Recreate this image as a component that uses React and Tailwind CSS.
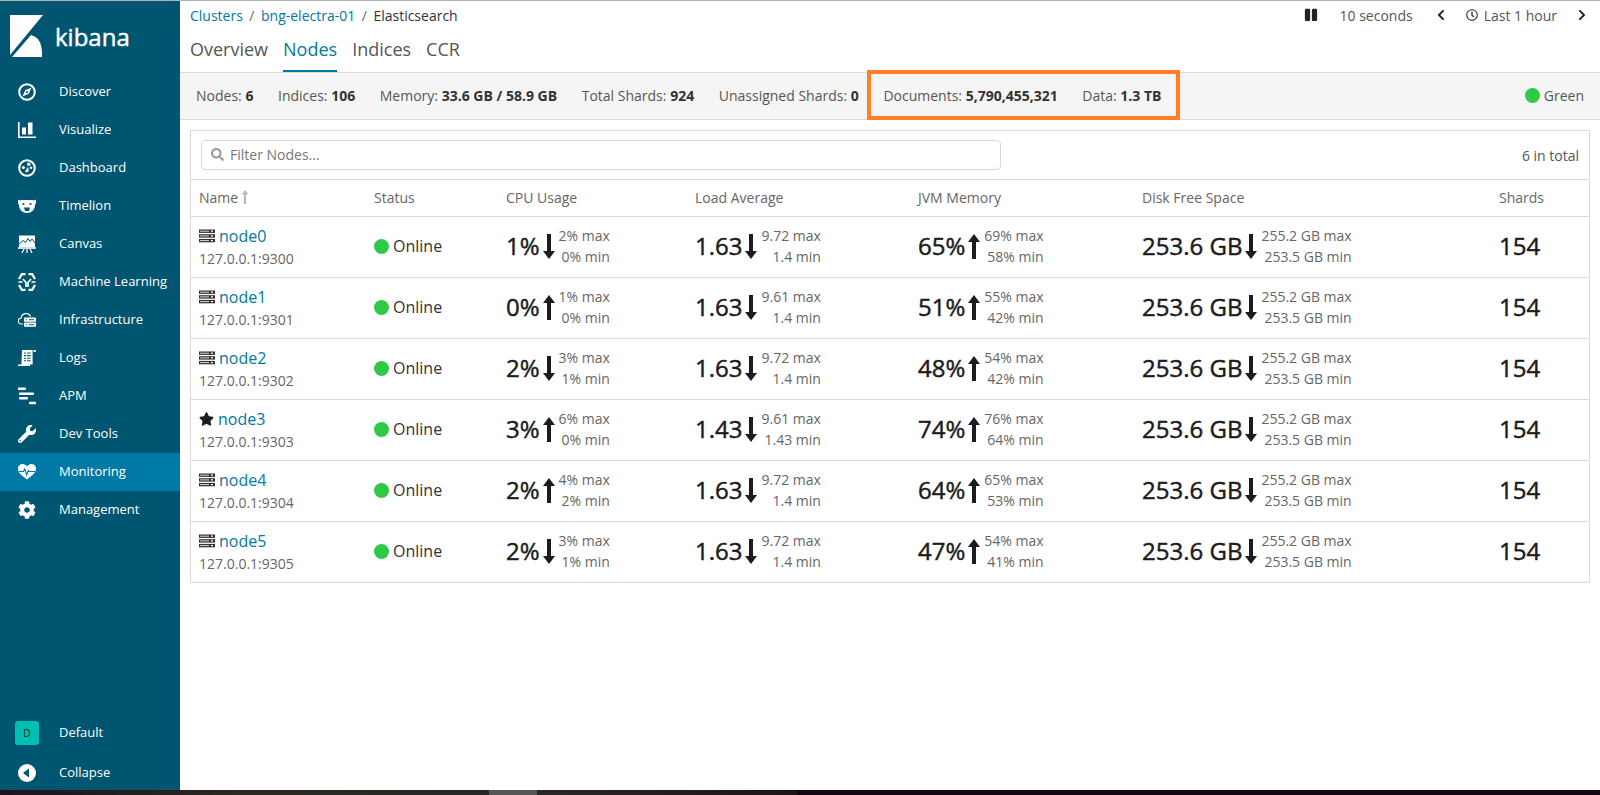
import React from "react";
import { FaWrench, FaCog, FaStar, FaPause, FaChevronLeft, FaChevronRight, FaRegClock, FaSearch } from "react-icons/fa";

const W = "#ffffff";
const I = ({ children }) => (
  <svg viewBox="0 0 18 18" className="w-[18px] h-[18px] shrink-0" fill="none">{children}</svg>
);
const icons = {
  compass: (
    <I>
      <circle cx="9" cy="9" r="7.8" stroke={W} strokeWidth="2" />
      <path d="M13.5 4.5 L10.8 10.8 L4.5 13.5 L7.2 7.2 Z M9 8 a1 1 0 1 0 .01 0" fill={W} fillRule="evenodd" />
    </I>
  ),
  chart: (
    <I>
      <path d="M0 1h1.6v14.4H18V17H0Z" fill={W} />
      <rect x="4" y="6.5" width="4" height="7" fill={W} />
      <rect x="10" y="1.5" width="4.5" height="12" fill={W} />
    </I>
  ),
  dash: (
    <I>
      <circle cx="9" cy="9" r="7.8" stroke={W} strokeWidth="2" />
      <circle cx="5.4" cy="8.4" r="1.5" fill={W} />
      <circle cx="10.8" cy="5.2" r="1.7" fill={W} />
      <circle cx="13" cy="8.8" r="1.3" fill={W} />
      <path d="M7 12.6 L10 7.8 L10.8 11.6 A2.2 2.2 0 0 1 7 12.6Z" fill={W} />
    </I>
  ),
  bear: (
    <I>
      <path d="M0 2.5c1.5 1 3 1 4 .5h10c1 .5 2.5.5 4-.5 .4 3-.4 4.5-1 5.5 0 5-4 8-8 8s-8-3-8-8C.4 7 -.4 5.5 0 2.5Z" fill={W} />
      <circle cx="5.5" cy="7" r="1.1" fill="#005571" />
      <circle cx="12.5" cy="7" r="1.1" fill="#005571" />
      <path d="M6 10.5h6l-1 3.5H7Z" fill="#005571" />
    </I>
  ),
  canvas: (
    <I>
      <rect x="1" y="0.5" width="16" height="11.5" fill={W} />
      <path d="M1 9 L5 5.5 L7.5 7.5 L10 3.5 L12 6.5 L14 4 L17 8" stroke="#005571" strokeWidth="1" />
      <rect x="0" y="12.2" width="18" height="1.6" fill={W} />
      <path d="M6 14 L4 18 M9 14 V18 M12 14 L14 18" stroke={W} strokeWidth="1.2" />
    </I>
  ),
  ml: (
    <I>
      <path d="M7.5 1.2 L3.8 1.2 L1 6 M1 12 L3.8 16.8 L7.5 16.8 M10.5 1.2 L14.2 1.2 L17 6 M17 12 L14.2 16.8 L10.5 16.8" stroke={W} strokeWidth="2.2" />
      <path d="M5 6 L8 9.5 V14 M13 6 L10 9.5 V14 M0.5 9h4M13.5 9h4" stroke={W} strokeWidth="1.7" />
    </I>
  ),
  infra: (
    <I>
      <path d="M5 13H3.5a3 3 0 0 1-.4-6A5 5 0 0 1 12.6 5.4" stroke={W} strokeWidth="1.1" />
      <rect x="6" y="6.6" width="12" height="4.2" rx="0.6" fill={W} />
      <rect x="6" y="11.6" width="12" height="4.2" rx="0.6" fill={W} />
      <path d="M8 8.7h1M11 8.7h5M8 13.7h1M11 13.7h5" stroke="#005571" strokeWidth="1" />
    </I>
  ),
  logs: (
    <I>
      <path d="M4 1h10.6v14.5H12V17H0v-1.6h3.4Z" fill={W} />
      <path d="M6 4h2M9 4h3.6M6 6.6h2M9 6.6h3.6M6 9.2h2M9 9.2h3.6M6 11.8h2M9 11.8h3.6" stroke="#005571" strokeWidth="1.1" />
      <path d="M15.5 1h2.2v2h-2.2Z" fill={W} />
    </I>
  ),
  apm: (
    <I>
      <rect x="-1" y="0.5" width="9" height="2.4" rx="0.8" fill={W} />
      <rect x="1" y="5.5" width="15" height="2.4" rx="0.8" fill={W} />
      <rect x="1" y="10" width="9" height="2.4" rx="0.8" fill={W} />
      <rect x="11" y="14.8" width="7" height="2.4" rx="0.8" fill={W} />
    </I>
  ),
  heart: (
    <I>
      <path d="M9 16.5 C4 12.5 0 10 0 5.5 C0 2.5 2.2 1 4.5 1 C6.5 1 8 2 9 3.5 C10 2 11.5 1 13.5 1 C15.8 1 18 2.5 18 5.5 C18 10 14 12.5 9 16.5Z" fill={W} />
      <path d="M1 8.5h4.5l1.2-2.5 2 6 1.6-4.5 0.8 1H17" stroke="#0079a5" strokeWidth="1.1" />
    </I>
  ),
};

const nav = [
  ["Discover", icons.compass],
  ["Visualize", icons.chart],
  ["Dashboard", icons.dash],
  ["Timelion", icons.bear],
  ["Canvas", icons.canvas],
  ["Machine Learning", icons.ml],
  ["Infrastructure", icons.infra],
  ["Logs", icons.logs],
  ["APM", icons.apm],
  ["Dev Tools", <FaWrench className="w-[18px] h-[18px] text-white" />],
  ["Monitoring", icons.heart, true],
  ["Management", <FaCog className="w-[18px] h-[18px] text-white" />],
];

const Arrow = ({ up, size = "h-[25px] w-[12px] -mt-[2px]" }) => (
  <svg viewBox="0 0 12 25" className={`${size} shrink-0`} fill="#1a1c21">
    {up ? (
      <path d="M6 0 L12 8 H8 V25 H4 V8 H0 Z" />
    ) : (
      <path d="M6 25 L12 17 H8 V0 H4 V17 H0 Z" />
    )}
  </svg>
);

const Metric = ({ value, up, max, min }) => (
  <div className="flex items-center">
    <span className="text-[24px] leading-[32px] -mt-[2px] font-normal [-webkit-text-stroke:0.45px_#1a1c21] text-[#1a1c21] mr-[3px]">{value}</span>
    <Arrow up={up} />
    <div className="flex flex-col items-end text-[14px] leading-[21px] text-[#666666] ml-[4px] -mt-[2px]">
      <span>{max}</span>
      <span>{min}</span>
    </div>
  </div>
);

const Server = () => (
  <svg viewBox="0 0 16 14" className="w-[16px] h-[14px] shrink-0">
    <rect x="0" y="0.5" width="16" height="3.4" fill="#333333" />
    <rect x="0" y="5.2" width="16" height="3.4" fill="#333333" />
    <rect x="0" y="9.9" width="16" height="3.4" fill="#333333" />
    <path d="M1 2.2h9M1 6.9h9M1 11.6h9" stroke="#d9d9d9" strokeWidth="1" />
    <path d="M12 2.2h2M12 6.9h2M12 11.6h2" stroke="#ffffff" strokeWidth="1.2" />
  </svg>
);

const rows = [
  ["node0", "9300", "1%", false, "2% max", "0% min", "1.63", false, "9.72 max", "1.4 min", "65%", true, "69% max", "58% min"],
  ["node1", "9301", "0%", true, "1% max", "0% min", "1.63", false, "9.61 max", "1.4 min", "51%", true, "55% max", "42% min"],
  ["node2", "9302", "2%", false, "3% max", "1% min", "1.63", false, "9.72 max", "1.4 min", "48%", true, "54% max", "42% min"],
  ["node3", "9303", "3%", true, "6% max", "0% min", "1.43", false, "9.61 max", "1.43 min", "74%", true, "76% max", "64% min"],
  ["node4", "9304", "2%", true, "4% max", "2% min", "1.63", false, "9.72 max", "1.4 min", "64%", true, "65% max", "53% min"],
  ["node5", "9305", "2%", false, "3% max", "1% min", "1.63", false, "9.72 max", "1.4 min", "47%", true, "54% max", "41% min"],
];

const cols = "grid grid-cols-[175px_132px_189px_223px_224px_358px_1fr]";

const Stat = ({ label, value }) => (
  <span>
    {label}: <b className="font-bold text-[#333333]">{value}</b>
  </span>
);

export default function App() {
  return (
    <div className="h-[795px] w-[1600px] flex flex-col overflow-hidden bg-white text-[#333333] font-['Open_Sans',sans-serif]">
      <div className="h-px bg-[#b3b3b3] shrink-0" />
      <div className="flex flex-1 min-h-0">
        <aside className="w-[180px] shrink-0 bg-[#005571] flex flex-col text-white text-[13px]">
          <div className="h-[72px] flex items-start pl-[10px] pt-[14px] gap-[12px]">
            <svg viewBox="0 0 33 42" className="w-[33px] h-[42px] shrink-0">
              <path d="M0 0H33L0 40Z" fill={W} />
              <path d="M2 42 L21 20 C32 23 32 34 32 42Z" fill={W} />
            </svg>
            <span className="text-[24px] leading-[30px] font-normal [-webkit-text-stroke:0.45px_#ffffff] mt-[7px]">kibana</span>
          </div>
          {nav.map(([label, icon, active]) => (
            <div key={label} className={`h-[38px] flex items-center pl-[18px] gap-[23px] ${active ? "bg-[#0079a5]" : ""}`}>
              {icon}
              <span>{label}</span>
            </div>
          ))}
          <div className="flex-1" />
          <div className="h-[40px] mb-[3px] flex items-center pl-[15px] gap-[20px]">
            <div className="w-[24px] h-[24px] rounded-[3px] bg-[#00bfb3] flex items-center justify-center text-[10px] text-[#1a1c21]">D</div>
            <span>Default</span>
          </div>
          <div className="h-[34px] flex items-center pl-[18px] gap-[23px]">
            <svg viewBox="0 0 18 18" className="w-[18px] h-[18px] shrink-0">
              <circle cx="9" cy="9" r="9" fill={W} />
              <path d="M5 9 L11 4.5 V13.5Z" fill="#005571" />
            </svg>
            <span>Collapse</span>
          </div>
        </aside>
        <main className="flex-1 min-w-0 flex flex-col relative">
          <div className="h-[72px] border-b border-[#d9d9d9] shrink-0 pl-[10px] pr-[13px] relative">
            <div className="flex justify-between items-center h-[28px] text-[14px]">
              <div className="flex items-center gap-[6.5px]">
                <span className="text-[#0079a5]">Clusters</span>
                <span className="text-[#666666]">/</span>
                <span className="text-[#0079a5]">bng-electra-01</span>
                <span className="text-[#666666]">/</span>
                <span className="text-[#333333]">Elasticsearch</span>
              </div>
              <div className="flex items-center text-[#555555]">
                <FaPause className="w-[14px] h-[14px] text-[#222222] mr-[22px]" />
                <span className="mr-[23px]">10 seconds</span>
                <FaChevronLeft className="w-[10px] h-[12px] text-[#222222] mr-[20px]" />
                <FaRegClock className="w-[12px] h-[12px] text-[#333333] mr-[6px]" />
                <span className="mr-[20px]">Last 1 hour</span>
                <FaChevronRight className="w-[10px] h-[12px] text-[#222222]" />
              </div>
            </div>
            <div className="flex gap-[15px] text-[18px] leading-[26px] text-[#555555] mt-[7px]">
              <span>Overview</span>
              <span className="text-[#0079a5] relative">
                Nodes
                <span className="absolute left-0 right-0 top-[34px] h-[2px] bg-[#0079a5]" />
              </span>
              <span>Indices</span>
              <span>CCR</span>
            </div>
          </div>
          <div className="h-[47px] pb-[2px] bg-[#f5f5f5] border-b border-[#d9d9d9] shrink-0 flex items-center justify-between pl-[16px] pr-[16px] text-[14px] text-[#555555]">
            <div className="flex gap-[24.6px]">
              <Stat label="Nodes" value="6" />
              <Stat label="Indices" value="106" />
              <Stat label="Memory" value="33.6 GB / 58.9 GB" />
              <Stat label="Total Shards" value="924" />
              <Stat label="Unassigned Shards" value="0" />
              <Stat label="Documents" value="5,790,455,321" />
              <Stat label="Data" value="1.3 TB" />
            </div>
            <div className="flex items-center gap-[4px]">
              <span className="w-[15px] h-[15px] rounded-full bg-[#2ec946]" />
              <span>Green</span>
            </div>
          </div>
          <div className="absolute left-[687px] top-[69px] w-[313px] h-[50px] border-[4px] border-[#ff7e26]" />
          <section className="mt-[10px] ml-[10px] mr-[10px] border border-[#d9d9d9] text-[14px]">
            <div className="h-[49px] flex items-center justify-between pl-[10px] pr-[10px] border-b border-[#d9d9d9]">
              <div className="w-[800px] h-[30px] pb-[2px] border border-[#d9d9d9] rounded-[4px] flex items-center pl-[9px] gap-[6px] text-[#777777]">
                <FaSearch className="w-[13px] h-[13px] text-[#999999]" />
                <span>Filter Nodes...</span>
              </div>
              <span className="text-[#555555]">6 in total</span>
            </div>
            <div className={`${cols} h-[37px] pb-[2px] items-center border-b border-[#d9d9d9] text-[#666666]`}>
              <div className="pl-[8px] flex items-center gap-[3px]">
                Name
                <Arrow up size="w-[8px] h-[14px] opacity-30" />
              </div>
              <div className="pl-[8px]">Status</div>
              <div className="pl-[8px]">CPU Usage</div>
              <div className="pl-[8px]">Load Average</div>
              <div className="pl-[8px]">JVM Memory</div>
              <div className="pl-[8px]">Disk Free Space</div>
              <div className="pl-[7px]">Shards</div>
            </div>
            {rows.map((r, i) => (
              <div key={r[0]} className={`${cols} items-center ${i < rows.length - 1 ? "h-[61px] border-b border-[#d9d9d9]" : "h-[60px]"}`}>
                <div className="pl-[8px]">
                  <div className="flex items-center gap-[4px] text-[16px] leading-[24px] text-[#0079a5]">
                    {r[0] === "node3" ? <FaStar className="w-[15px] h-[14px] text-[#1a1c21]" /> : <Server />}
                    {r[0]}
                  </div>
                  <div className="leading-[22px] text-[#666666]">127.0.0.1:{r[1]}</div>
                </div>
                <div className="pl-[8px] pb-[2px] flex items-center gap-[4px] text-[16px] text-[#333333]">
                  <span className="w-[15px] h-[15px] rounded-full bg-[#2ec946]" />
                  Online
                </div>
                <div className="pl-[8px]"><Metric value={r[2]} up={r[3]} max={r[4]} min={r[5]} /></div>
                <div className="pl-[8px]"><Metric value={r[6]} up={r[7]} max={r[8]} min={r[9]} /></div>
                <div className="pl-[8px]"><Metric value={r[10]} up={r[11]} max={r[12]} min={r[13]} /></div>
                <div className="pl-[8px]"><Metric value="253.6 GB" up={false} max="255.2 GB max" min="253.5 GB min" /></div>
                <div className="pl-[7px] pb-[2px] text-[24px] font-normal [-webkit-text-stroke:0.45px_#1a1c21] text-[#1a1c21]">154</div>
              </div>
            ))}
          </section>
        </main>
      </div>
      <div className="h-[5px] shrink-0 flex">
        <div className="w-[489px] bg-gradient-to-r from-[#1c141a] via-[#2b2820] to-[#262626]" />
        <div className="w-[48px] bg-[#555555]" />
        <div className="w-[260px] bg-gradient-to-r from-[#2a2626] to-[#1e1418]" />
        <div className="flex-1 bg-[#170611]" />
      </div>
    </div>
  );
}
